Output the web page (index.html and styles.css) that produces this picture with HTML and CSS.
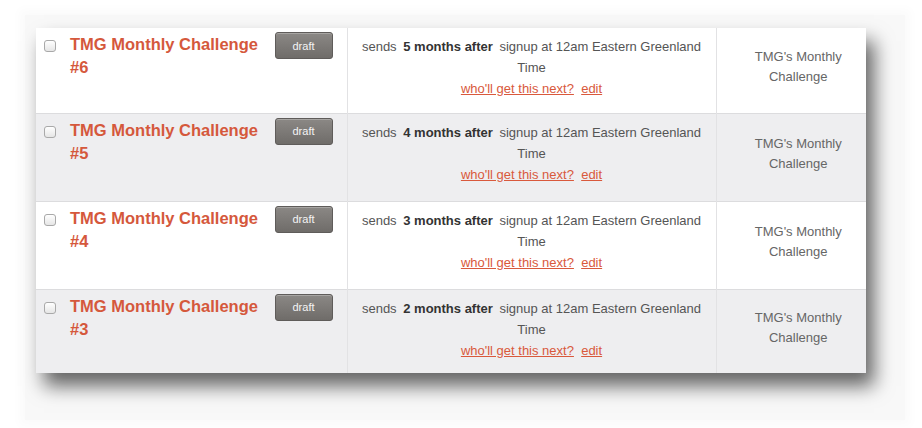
FILE: index.html
```
<!DOCTYPE html>
<html lang="en">
<head>
  <meta charset="UTF-8">
  <meta name="viewport" content="width=device-width, initial-scale=1.0">
  <title>Emails</title>
  <link rel="stylesheet" href="styles.css">
</head>
<body>

  <div class="frame">
    <table class="emails">
      <tbody>
        <tr>
          <td class="name-cell">
            <div class="name-wrap">
              <input type="checkbox" class="pick">
              <a href="#" class="title">TMG Monthly Challenge #6</a>
              <button class="draft-btn">draft</button>
            </div>
          </td>
          <td class="sched-cell">
            sends <b class="when">5 months after</b> signup at 12am Eastern Greenland Time<br>
            <a href="#" class="link">who'll get this next?</a>&nbsp; <a href="#" class="link">edit</a>
          </td>
          <td class="list-cell">TMG's Monthly Challenge</td>
        </tr>
        <tr class="alt">
          <td class="name-cell">
            <div class="name-wrap">
              <input type="checkbox" class="pick">
              <a href="#" class="title">TMG Monthly Challenge #5</a>
              <button class="draft-btn">draft</button>
            </div>
          </td>
          <td class="sched-cell">
            sends <b class="when">4 months after</b> signup at 12am Eastern Greenland Time<br>
            <a href="#" class="link">who'll get this next?</a>&nbsp; <a href="#" class="link">edit</a>
          </td>
          <td class="list-cell">TMG's Monthly Challenge</td>
        </tr>
        <tr>
          <td class="name-cell">
            <div class="name-wrap">
              <input type="checkbox" class="pick">
              <a href="#" class="title">TMG Monthly Challenge #4</a>
              <button class="draft-btn">draft</button>
            </div>
          </td>
          <td class="sched-cell">
            sends <b class="when">3 months after</b> signup at 12am Eastern Greenland Time<br>
            <a href="#" class="link">who'll get this next?</a>&nbsp; <a href="#" class="link">edit</a>
          </td>
          <td class="list-cell">TMG's Monthly Challenge</td>
        </tr>
        <tr class="alt">
          <td class="name-cell">
            <div class="name-wrap">
              <input type="checkbox" class="pick">
              <a href="#" class="title">TMG Monthly Challenge #3</a>
              <button class="draft-btn">draft</button>
            </div>
          </td>
          <td class="sched-cell">
            sends <b class="when">2 months after</b> signup at 12am Eastern Greenland Time<br>
            <a href="#" class="link">who'll get this next?</a>&nbsp; <a href="#" class="link">edit</a>
          </td>
          <td class="list-cell">TMG's Monthly Challenge</td>
        </tr>
      </tbody>
    </table>
  </div>

</body>
</html>
```

FILE: styles.css
```
body {
  font-family: "Liberation Sans", Arial, sans-serif;
  margin: 0;
  padding: 0;
  background-color: #fff;
}

.frame {
  margin: 15px 17px 8px 25px;
  padding: 13px 39px 47px 11px;
  background-color: #f8f8f8;
  box-shadow: 0 0 10px 6px #fbfbfb;
}

.emails {
  width: 830px;
  border-collapse: collapse;
  background-color: #fff;
  box-shadow: 8px 13px 18px rgba(0, 0, 0, 0.6);
}

.emails tr.alt {
  background-color: #eeeef0;
}

.emails td {
  height: 88px;
  padding: 0;
  box-sizing: border-box;
  border-top: 1px solid #dcdcde;
  border-left: 1px solid #e2e2e4;
}

.emails tr:first-child td {
  height: 85px;
  border-top: none;
}

.emails tr:last-child td {
  height: 84px;
}

.emails td:first-child {
  border-left: none;
}

.name-cell {
  width: 311px;
  vertical-align: top;
}

.name-wrap {
  display: flex;
  align-items: flex-start;
  padding: 4px 14px 0 8px;
}

.pick {
  appearance: none;
  -webkit-appearance: none;
  width: 12px;
  height: 12px;
  margin: 8px 14px 0 0;
  flex-shrink: 0;
  border: 1px solid #a9a9a9;
  border-radius: 3px;
  background: linear-gradient(#fff, #e6e6e6);
}

.title {
  flex: 1;
  margin: 1px 12px 0 0;
  font-size: 16.5px;
  line-height: 23px;
  font-weight: bold;
  color: #d5583c;
  text-decoration: none;
}

.draft-btn {
  width: 58px;
  height: 27px;
  flex-shrink: 0;
  font-family: "Liberation Sans", Arial, sans-serif;
  font-size: 11px;
  color: #f4f4f4;
  background: linear-gradient(#8b8885, #6f6c69);
  border: 1px solid #5f5c5a;
  border-radius: 3px;
  box-shadow: inset 0 1px 0 rgba(255, 255, 255, 0.25);
  cursor: pointer;
}

.sched-cell {
  width: 369px;
  vertical-align: top;
  text-align: center;
  padding: 8px 10px 0 !important;
  font-size: 13px;
  line-height: 21px;
  color: #555;
}

.when {
  margin: 0 3px;
  color: #333;
}

.link {
  color: #d9593c;
  text-decoration: underline;
}

.list-cell {
  width: 150px;
  vertical-align: middle;
  text-align: center;
  padding: 0 12px 6px 26px !important;
  font-size: 13px;
  line-height: 20px;
  color: #666;
}
```
